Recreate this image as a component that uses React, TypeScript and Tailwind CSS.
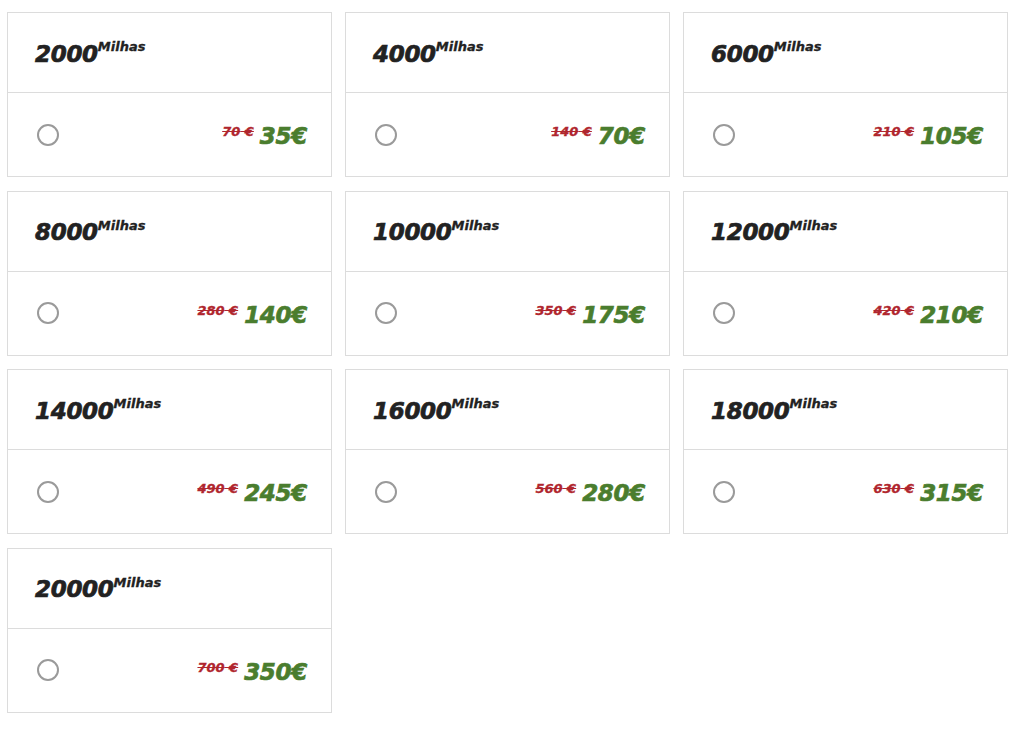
import React from "react";

const items = [
  [2000, 70, 35],
  [4000, 140, 70],
  [6000, 210, 105],
  [8000, 280, 140],
  [10000, 350, 175],
  [12000, 420, 210],
  [14000, 490, 245],
  [16000, 560, 280],
  [18000, 630, 315],
  [20000, 700, 350],
];

export default function App() {
  return (
    <div
      className="min-h-[730px] w-[1024px] bg-white pl-[7px] pt-[12px]"
      style={{ fontFamily: '"DejaVu Sans", "Liberation Sans", sans-serif' }}
    >
      <div className="grid grid-cols-[325px_325px_325px] gap-x-[13px] gap-y-[13.67px]">
        {items.map(([m, old, price]) => (
          <div key={m} className="border border-[#dcdcdc] bg-white">
            <div className="flex h-[80px] items-center border-b border-[#dcdcdc] pl-[27px]">
              <span className="mt-[3px] text-[23px] font-bold italic leading-none tracking-[-0.3px] text-[#222] [-webkit-text-stroke:0.7px_#222]">
                {m}
              </span>
              <span className="relative top-[-6px] text-[13px] font-bold italic leading-none text-[#222] [-webkit-text-stroke:0.3px_#222]">
                Milhas
              </span>
            </div>
            <div className="flex h-[83px] items-center justify-between pl-[29px] pr-[24px]">
              <span className="block h-[22px] w-[22px] rounded-full border-2 border-[#9a9a9a]" />
              <div className="mt-[4px] flex items-start gap-[6px]">
                <span className="mt-[0px] text-[13px] font-bold italic leading-none text-[#b0262e] line-through [-webkit-text-stroke:0.3px_#b0262e]">
                  {old} €
                </span>
                <span className="text-[23px] font-bold italic leading-none tracking-[-0.3px] text-[#4a7d2e] [-webkit-text-stroke:0.7px_#4a7d2e]">
                  {price}€
                </span>
              </div>
            </div>
          </div>
        ))}
      </div>
    </div>
  );
}
